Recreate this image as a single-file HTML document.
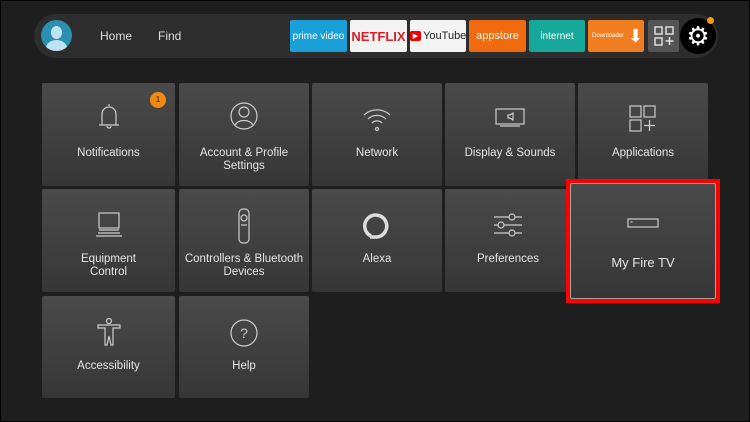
<!DOCTYPE html>
<html><head><style>
*{margin:0;padding:0;box-sizing:border-box}
body{width:750px;height:422px;background:#1e1e1e;font-family:"Liberation Sans",sans-serif;position:relative;overflow:hidden;border:1px solid #000}
.bar{position:absolute;left:33px;top:13px;width:684px;height:44px;background:#2d2d2d;border-radius:22px}
.av{position:absolute;left:40px;top:19px;width:31px;height:31px;border-radius:50%;background:#2a8fb0;overflow:hidden}
.nav{position:absolute;top:28px;color:#ddd;font-size:12px}
.app{position:absolute;top:19px;height:32px;border-radius:2px;font-size:11px;display:flex;align-items:center;justify-content:center;color:#fff}
.t{position:absolute;background:linear-gradient(#4a4a4a,#363636);border-radius:2px;color:#e6e6e6;font-size:11.5px;text-align:center}
.t svg{position:absolute;left:50%;transform:translateX(-50%)}
.t .l{position:absolute;left:0;right:0;line-height:13px}
</style></head><body>
<div class="bar"></div>
<div class="av"><div style="position:absolute;left:10px;top:6px;width:11px;height:13px;border-radius:50%;background:#bfe3ee"></div><div style="position:absolute;left:5px;top:20px;width:21px;height:16px;border-radius:50%;background:#bfe3ee"></div></div>
<div class="nav" style="left:99px">Home</div>
<div class="nav" style="left:157px">Find</div>
<div class="app" style="left:289px;width:57px;background:#1aa0d8;font-size:10px">prime video</div>
<div class="app" style="left:349px;width:57px;background:#f3f3f3;color:#d81f26;font-weight:bold;font-size:13px">NETFLIX</div>
<div class="app" style="left:409px;width:56px;background:#f3f3f3;color:#222;font-size:11px"><span style="background:#e00;color:#fff;font-size:7px;padding:1px 3px;border-radius:2px;margin-right:2px">▶</span>YouTube</div>
<div class="app" style="left:468px;width:57px;background:#f26a10">appstore</div>
<div class="app" style="left:528px;width:56px;background:#16a89a;font-size:10px">internet</div>
<div class="app" style="left:587px;width:56px;background:#f07d1f;font-size:6px;justify-content:flex-start;padding-left:4px">Downloader<span style="font-size:18px;margin-left:4px">⬇</span></div>
<div class="app" style="left:647px;width:31px;background:#555"><svg width="20" height="20" viewBox="0 0 20 20" fill="none" stroke="#ddd" stroke-width="1.5"><rect x="1" y="1" width="7" height="7"/><rect x="12" y="1" width="7" height="7"/><rect x="1" y="12" width="7" height="7"/><path d="M15.5 11v8M11.5 15h8"/></svg></div>
<div style="position:absolute;left:679px;top:17px;width:36px;height:36px;border-radius:50%;background:#000;display:flex;align-items:center;justify-content:center;color:#fff;font-size:26px">⚙</div>
<div style="position:absolute;left:706px;top:16px;width:7px;height:7px;border-radius:50%;background:#f39a1c"></div>

<div class="t" style="left:41px;top:82px;width:133px;height:103px">
<svg style="top:18px" width="30" height="30" viewBox="0 0 30 30" fill="none" stroke="#ccc" stroke-width="1.2"><path d="M15 3v2M8 24V13a7 7 0 0 1 14 0v11M5 24h20M13 25a2 2 0 0 0 4 0"/></svg>
<div style="position:absolute;left:108px;top:9px;width:16px;height:16px;border-radius:50%;background:#f08a10;color:#222;font-size:8px;line-height:16px">1</div>
<div class="l" style="top:64px">Notifications</div></div>
<div class="t" style="left:178px;top:82px;width:130px;height:103px">
<svg style="top:18px" width="30" height="30" viewBox="0 0 30 30" fill="none" stroke="#ccc" stroke-width="1.2"><circle cx="15" cy="15" r="13"/><circle cx="15" cy="11" r="5"/><path d="M6 24a10 8 0 0 1 18 0"/></svg>
<div class="l" style="top:64px">Account &amp; Profile<br>Settings</div></div>
<div class="t" style="left:311px;top:82px;width:130px;height:103px">
<svg style="top:22px" width="30" height="28" viewBox="0 0 30 28" fill="none" stroke="#ccc" stroke-width="1.2"><path d="M2 10a19 19 0 0 1 26 0M6 14a13 13 0 0 1 18 0M10 18a7 7 0 0 1 10 0"/><circle cx="15" cy="24" r="1.5"/></svg>
<div class="l" style="top:64px">Network</div></div>
<div class="t" style="left:444px;top:82px;width:130px;height:103px">
<svg style="top:24px" width="30" height="22" viewBox="0 0 30 22" fill="none" stroke="#ccc" stroke-width="1.2"><rect x="1" y="2" width="28" height="15"/><path d="M5 19h20M13 8h2l3-2v7l-3-2h-2z"/></svg>
<div class="l" style="top:64px">Display &amp; Sounds</div></div>
<div class="t" style="left:577px;top:82px;width:130px;height:103px">
<svg style="top:22px" width="28" height="28" viewBox="0 0 28 28" fill="none" stroke="#ccc" stroke-width="1.2"><rect x="1" y="1" width="11" height="11"/><rect x="15" y="1" width="11" height="11"/><rect x="1" y="15" width="11" height="11"/><path d="M20.5 15v11M15 20.5h11"/></svg>
<div class="l" style="top:64px">Applications</div></div>

<div class="t" style="left:41px;top:188px;width:133px;height:103px">
<svg style="top:22px" width="30" height="28" viewBox="0 0 30 28" fill="none" stroke="#ccc" stroke-width="1.2"><rect x="5" y="2" width="20" height="15"/><path d="M5 19h20M2 25h26M4 22h22"/></svg>
<div class="l" style="top:64px">Equipment<br>Control</div></div>
<div class="t" style="left:178px;top:188px;width:130px;height:103px">
<svg style="top:19px" width="14" height="36" viewBox="0 0 14 36" fill="none" stroke="#ccc" stroke-width="1.2"><rect x="2" y="1" width="10" height="34" rx="4"/><circle cx="7" cy="10" r="3"/><path d="M5 16v2M7 16v2M9 16v2"/></svg>
<div class="l" style="top:64px">Controllers &amp; Bluetooth<br>Devices</div></div>
<div class="t" style="left:311px;top:188px;width:130px;height:103px">
<svg style="top:22px" width="30" height="30" viewBox="0 0 30 30" fill="none" stroke="#ddd" stroke-width="3.5"><path d="M9 25A11 11 0 1 1 15 26H8"/></svg>
<div class="l" style="top:64px">Alexa</div></div>
<div class="t" style="left:444px;top:188px;width:126px;height:103px">
<svg style="top:24px" width="30" height="24" viewBox="0 0 30 24" fill="none" stroke="#ccc" stroke-width="1.2"><path d="M1 4h28M1 12h28M1 20h28"/><circle cx="19" cy="4" r="3" fill="#444"/><circle cx="8" cy="12" r="3" fill="#444"/><circle cx="19" cy="20" r="3" fill="#444"/></svg>
<div class="l" style="top:64px">Preferences</div></div>

<div style="position:absolute;left:565px;top:178px;width:154px;height:124px;border:4px solid #f00;background:#3b3b3b"></div>
<div class="t" style="left:569px;top:182px;width:146px;height:116px;border:1px solid #aaa598">
<svg style="top:34px" width="32" height="10" viewBox="0 0 32 10" fill="none" stroke="#ccc" stroke-width="1.2"><rect x="1" y="1" width="30" height="8"/><path d="M3.5 4h2" /></svg>
<div class="l" style="top:72px;font-size:13px">My Fire TV</div></div>

<div class="t" style="left:41px;top:295px;width:133px;height:102px">
<svg style="top:22px" width="24" height="30" viewBox="0 0 24 30" fill="none" stroke="#ccc" stroke-width="1.2"><circle cx="12" cy="3" r="2.5"/><path d="M1 7h22v3h-7v17h-2l-2-9-2 9h-2V10H1z"/></svg>
<div class="l" style="top:64px">Accessibility</div></div>
<div class="t" style="left:178px;top:295px;width:130px;height:102px">
<svg style="top:22px" width="30" height="30" viewBox="0 0 30 30" fill="none" stroke="#ccc" stroke-width="1.2"><circle cx="15" cy="15" r="13"/><text x="15" y="20" font-size="14" text-anchor="middle" fill="#ccc" stroke="none" font-family="Liberation Sans">?</text></svg>
<div class="l" style="top:64px">Help</div></div>
</body></html>
